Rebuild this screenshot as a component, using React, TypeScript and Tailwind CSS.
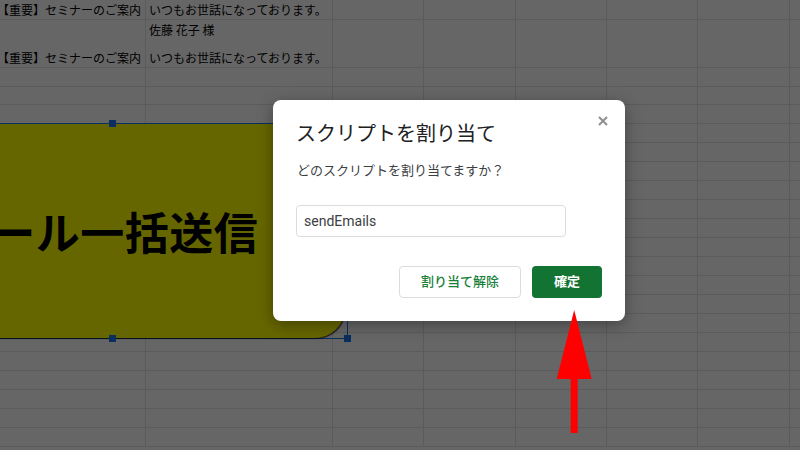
const colW = ["w-[146px]", "w-[187px]", "w-[91px]", "w-[92px]", "w-[91px]", "w-[91px]", "w-[92px]", "w-[91px]"];
const rowH = [
  "h-[20px]", "h-[48px]", "h-[19px]", "h-[18px]",
  "h-[19px]", "h-[19px]", "h-[19px]", "h-[19px]", "h-[19px]", "h-[19px]",
  "h-[19px]", "h-[19px]", "h-[19px]", "h-[19px]", "h-[19px]", "h-[19px]",
  "h-[19px]", "h-[19px]", "h-[19px]", "h-[19px]", "h-[19px]", "h-[19px]",
];

const subject = "【重要】セミナーのご案内";
const greeting = "いつもお世話になっております。";

const Cell = ({ w, children }: { w: string; children?: React.ReactNode }) => (
  <div className={`${w} shrink-0 h-full border-r border-[#e2e3e3] overflow-hidden whitespace-nowrap`}>
    {children}
  </div>
);

const cellContent = (r: number, c: number) => {
  if (r === 0 && c === 0) return <div className="-ml-[3px] leading-[19px]">{subject}</div>;
  if (r === 0 && c === 1) return <div className="pl-[3px] leading-[19px]">{greeting}</div>;
  if (r === 1 && c === 0)
    return (
      <div className="h-full flex flex-col justify-end">
        <div className="-ml-[3px] leading-[19px]">{subject}</div>
      </div>
    );
  if (r === 1 && c === 1)
    return (
      <div className="h-full flex flex-col justify-between pl-[3px]">
        <div className="leading-[19px]">佐藤 花子 様</div>
        <div className="leading-[19px]">{greeting}</div>
      </div>
    );
  return null;
};

const Sheet = () => (
  <div className="flex flex-col text-[12px] text-black" style={{ fontFamily: "'Noto Sans CJK JP', sans-serif" }}>
    {rowH.map((h, r) => (
      <div key={r} className={`${h} flex border-b border-[#e2e3e3] box-border`}>
        {colW.map((w, c) => (
          <Cell key={c} w={w}>{cellContent(r, c)}</Cell>
        ))}
      </div>
    ))}
  </div>
);

const Handle = ({ pos }: { pos: string }) => (
  <div className={`absolute ${pos} w-[7px] h-[7px] bg-[#1a73e8]`} />
);

const SendButton = () => (
  <div className="absolute left-[-123px] top-[123px] w-[471px] h-[216px] border border-[#1a73e8]">
    <div className="absolute left-0 top-0 right-[2px] bottom-0 rounded-[30px] bg-[#ffff00] shadow-[1px_1px_1px_rgba(0,0,0,0.7)] flex items-center justify-center">
      <span className="mr-[18px] text-[44px] font-bold tracking-[0.5px] text-black" style={{ fontFamily: "'Noto Sans CJK JP', sans-serif" }}>
        メール一括送信
      </span>
    </div>
    <Handle pos="left-[-4px] top-[-4px]" />
    <Handle pos="left-[231px] top-[-4px]" />
    <Handle pos="right-[-4px] top-[-4px]" />
    <Handle pos="right-[-4px] top-[104px]" />
    <Handle pos="right-[-4px] bottom-[-4px]" />
    <Handle pos="left-[231px] bottom-[-4px]" />
    <Handle pos="left-[-4px] bottom-[-4px]" />
    <Handle pos="left-[-4px] top-[104px]" />
  </div>
);

const Dialog = () => (
  <div
    className="absolute left-[273px] top-[100px] w-[352px] h-[221px] bg-white rounded-[8px] shadow-[0_4px_16px_rgba(0,0,0,0.35)] flex flex-col"
    style={{ fontFamily: "Roboto, 'Noto Sans CJK JP', sans-serif" }}
  >
    <button className="absolute top-[16px] right-[17px] w-[10px] h-[10px]">
      <svg width="10" height="10" viewBox="0 0 10 10">
        <path d="M1 1L9 9M9 1L1 9" stroke="#8f8f8f" strokeWidth="2" />
      </svg>
    </button>
    <h1 className="pt-[20px] pl-[23px] text-[20px] leading-[28px] text-[#202124]">スクリプトを割り当て</h1>
    <p className="mt-[13px] pl-[24px] text-[13px] leading-[20px] text-[#3c4043]">どのスクリプトを割り当てますか？</p>
    <div className="mt-[24px] ml-[23px] w-[270px] h-[32px] border border-[#dadce0] rounded-[4px] px-[7px] flex items-center text-[14px] text-[#3c4043]">
      sendEmails
    </div>
    <div className="mt-[29px] pr-[23px] flex justify-end gap-[11px]">
      <button className="w-[122px] h-[32px] border border-[#dadce0] rounded-[4px] text-[13px] font-medium text-[#188038]">
        割り当て解除
      </button>
      <button className="w-[70px] h-[32px] rounded-[4px] bg-[#137333] text-[13px] font-bold text-white">
        確定
      </button>
    </div>
  </div>
);

const RedArrow = () => (
  <svg className="absolute left-[556px] top-[310px]" width="37" height="124" viewBox="0 0 37 124">
    <polygon points="18.2,0 0.7,69 14.7,69 14.7,123 21.7,123 21.7,69 35.7,69" fill="#ff0000" />
  </svg>
);

export default function App() {
  return (
    <div className="relative w-[800px] h-[450px] overflow-hidden bg-white">
      <Sheet />
      <SendButton />
      <div className="absolute inset-0 bg-black/60" />
      <Dialog />
      <RedArrow />
    </div>
  );
}
